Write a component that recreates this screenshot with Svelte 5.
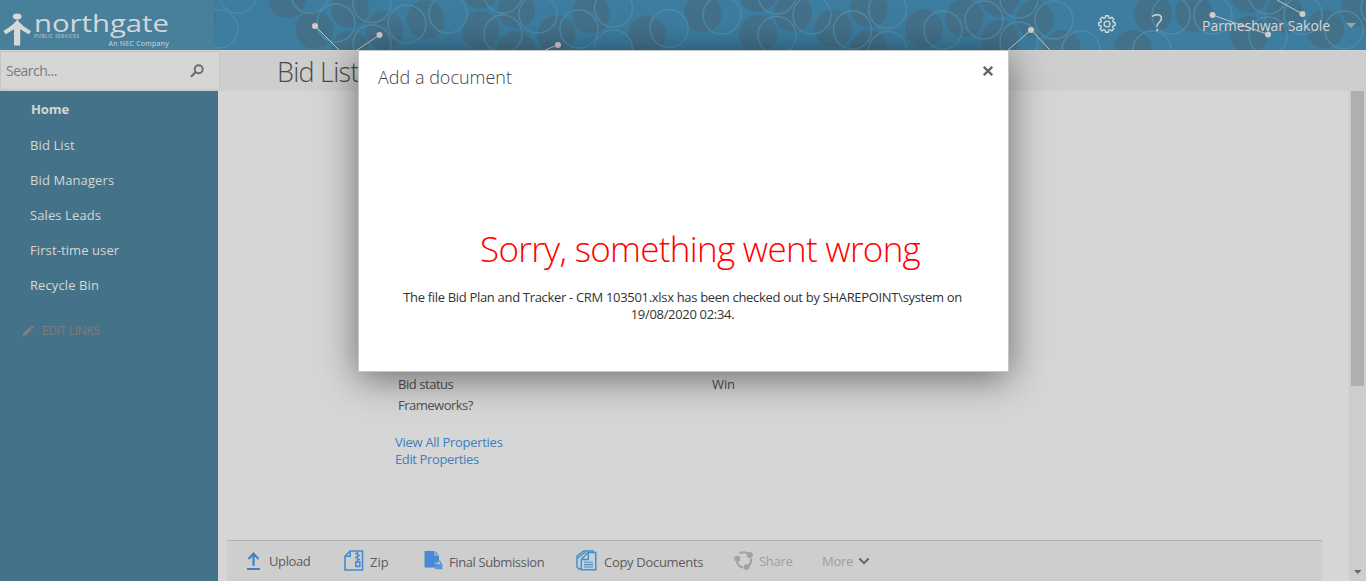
<script>
  const discs = [
    [197, 17], [287, -1], [314.5, 30], [350, 9], [350, 50], [384.5, 30], [425.5, 19.5], [480.5, -10.5],
    [480.5, 30.5], [516, 9], [516, 50], [556.5, 34.5], [591, 14], [647, 35], [703, 13], [758, -7], [758, 34],
    [793, 13], [833.5, 28.5], [869, 8], [869, 49], [924, 28.5], [964.5, 18], [1000, -2], [1000, 39],
    [1035, 19], [1062, 49], [1133, 49], [1153, 14], [1194, 13], [1249, -6], [1249, 35], [1285, 14],
    [1325, 29], [1360, 8]
  ];
  const rings = [
    [238, -6], [219, 29], [310, -6], [336, 23], [372, 3.5], [372, 44], [407, 24], [448, 14], [503, -6],
    [503, 34], [538, 14], [579, 29], [613.5, 8], [613.5, 49], [669, 28.5], [722, 15], [777, -5], [777, 35.5],
    [812, 15], [852.5, 30], [887.5, 9.5], [887.5, 50.5], [943, 30], [984, 20], [1019, -1], [1019, 41],
    [1054, 20], [1081, 50], [1152, 50], [1171, 15], [1213, 15], [1268, -5], [1268, 36], [1303, 15],
    [1344, 30], [1380, 8]
  ];
  const dots = [[315, 26], [379.5, 35], [558, 45], [1031, 30], [1212.5, 15], [1268, 34.5], [1302.5, 14]];
  const links = ['Bid List', 'Bid Managers', 'Sales Leads', 'First-time user', 'Recycle Bin'];
</script>

<div class="page">
  <header>
    <svg class="pattern" width="1366" height="50" viewBox="0 0 1366 50">
      <g fill="#44718a">
        {#each discs as [x, y]}<circle cx={x} cy={y} r="19" />{/each}
      </g>
      <g fill="none" stroke="#4e8aa8" stroke-width="1.4">
        {#each rings as [x, y]}<circle cx={x} cy={y} r="19" />{/each}
      </g>
      <path d="M315 26L339 50M379.5 35L357 50M558 45L545 50M1031 30L1008 50M1031 30L1050 50M1212.5 15L1268 34.5M1302.5 14L1277 0" fill="none" stroke="#c5c5c3" stroke-width="1" />
      <g fill="#d2cbc7">
        {#each dots as [x, y]}<circle cx={x} cy={y} r="3" />{/each}
      </g>
    </svg>
    <div class="brand">
      <svg class="figure" width="29" height="34" viewBox="0 0 29 34">
        <ellipse cx="14.2" cy="3.5" rx="4.4" ry="3" fill="#d6d8da" />
        <path d="M14.2 6.5C17 10.5 21 14 28 18L26 21.3C23.5 20 20 18 17.2 16.3V32.5H11V16.3C8 18 5 20 2.5 21.3L.5 18C7 14 11.5 10.5 14.2 6.5Z" fill="#d6d8da" />
      </svg>
      <div class="words">
        <span class="name">northgate</span>
        <span class="sub">PUBLIC SERVICES</span>
        <span class="nec">An NEC Company</span>
      </div>
    </div>
    <div class="tools">
      <svg class="gear" width="18" height="18" viewBox="0 0 18 18" fill="none" stroke="#d2d5d7" stroke-width="1.4" stroke-linejoin="round">
        <path d="M7.6.8h2.8l.4 2 1.3.6 1.8-1.2 2 2-1.2 1.7.5 1.4 2 .4v2.7l-2 .4-.6 1.3 1.2 1.8-2 2-1.7-1.2-1.4.6-.4 2H7.6l-.4-2-1.4-.6-1.7 1.2-2-2 1.2-1.8-.6-1.3-2-.4V7.7l2-.4.6-1.4-1.2-1.7 2-2 1.8 1.2 1.3-.6z" />
        <circle cx="9" cy="9" r="2.9" />
      </svg>
      <svg class="help" width="12" height="18" viewBox="0 0 12 18" fill="none" stroke="#d2d5d7" stroke-width="1.5">
        <path d="M1.3 2.5C4-.1 10.4-.2 10.4 4.4C10.4 8 6 8.2 6 12.7" />
        <path d="M6 15.2V17.2" stroke-width="1.8" />
      </svg>
      <span class="user">Parmeshwar Sakole</span>
      <i class="caret"></i>
    </div>
  </header>

  <div class="titlebar">
    <div class="search">
      <span>Search...</span>
      <svg width="14" height="14" viewBox="0 0 14 14" fill="none" stroke="#6c6c6c">
        <circle cx="8.7" cy="5.2" r="4" stroke-width="1.9" />
        <path d="M5.8 8L1 12.8" stroke-width="2.2" />
      </svg>
    </div>
    <h1>Bid List</h1>
  </div>

  <div class="main">
    <nav>
      <b>Home</b>
      {#each links as link}<a href="#top">{link}</a>{/each}
      <div class="edit">
        <svg width="12" height="12" viewBox="0 0 12 12" fill="#847f7e"><path d="M.5 11.5l.8-3.3L7.3 2.4l2.3 2.3-6 5.9zM8 1.7L9.2.6c.8-.7 2.8 1.1 2.1 2.2L10.2 4z" /></svg>
        <span>EDIT LINKS</span>
      </div>
    </nav>
    <section>
      <div class="details">
        <div class="row"><span class="k1">Bid status</span><span class="win">Win</span></div>
        <div class="row"><span class="k2">Frameworks?</span></div>
        <div class="actions">
          <a class="view" href="#all">View All Properties</a>
          <a class="editp" href="#edit">Edit Properties</a>
        </div>
      </div>
      <footer>
        <div class="item upload">
          <svg width="14" height="18" viewBox="0 0 14 18" fill="none" stroke="#3f83c4" stroke-width="2.2"><path d="M6.5 13.8V2M1.5 7L6.5 1.7l5 5.3M0 17h13" /></svg>
          <span>Upload</span>
        </div>
        <div class="item zip low">
          <svg width="20" height="21" viewBox="0 0 20 21" fill="none" stroke="#478bd1" stroke-width="1.6">
            <path d="M6.2 1H18.5V20H1V6.2zM6.2 1V6.2H1" />
            <path d="M13.5 1V12M11 3.5h2.5M13.5 5.5H16M11 7.5h2.5M13.5 9.5H16M11.8 12h4v4.4h-4z" />
          </svg>
          <span>Zip</span>
        </div>
        <div class="item final low">
          <svg width="19" height="19" viewBox="0 0 19 19" fill="#4989d6">
            <path d="M.5 0H10.5V4.5H15V10.5H13.5L11 12V16.5H.5z" />
            <path d="M11.2 0L15 3.8H11.2z" fill="#6d9edb" />
            <path d="M11 13h7.5v5.2H11z" fill="#5f96d8" /><path d="M12.6 13.2v-.9a2.1 2.1 0 014.2 0v.9" fill="none" stroke="#5f96d8" stroke-width="1.4" />
          </svg>
          <span>Final Submission</span>
        </div>
        <div class="item copy low">
          <svg width="21" height="21" viewBox="0 0 21 21" fill="none" stroke="#3f91cf" stroke-width="1.5">
            <path d="M12 2.5H19.8V19.8H5.3V9.5zM12.3 2.5V9.5H5.3" />
            <path d="M5 19H2.8L1 17V6L7.6.9H17V2.5M1.2 8.5L10 1.5" /><path d="M8 12.2h9M8 14.6h9M8 17h9" stroke-width="1.1" />
          </svg>
          <span>Copy Documents</span>
        </div>
        <div class="item share muted">
          <svg width="20" height="19" viewBox="0 0 20 19" fill="none" stroke="#a1a1a1" stroke-width="2.1">
            <path d="M5.5 2.5C8 .8 12 .8 14 2.5M17 7.5C17.4 11 16.3 13.5 14 15M9 16.7C5.7 16 3.6 13.7 3 10.8" />
            <circle cx="3.3" cy="7.7" r="2" fill="#a1a1a1" /><circle cx="15.8" cy="4" r="2" fill="#a1a1a1" /><circle cx="12.5" cy="16" r="1.8" fill="#a1a1a1" />
          </svg>
          <span>Share</span>
        </div>
        <div class="item more muted">
          <span>More</span>
          <svg width="12" height="8" viewBox="0 0 12 8" fill="none" stroke="#666" stroke-width="2"><path d="M1.3 1.5L6 6.2l4.7-4.7" /></svg>
        </div>
      </footer>
    </section>
    <aside><i class="thumb"></i><svg width="8" height="4" viewBox="0 0 8 4"><path d="M0 0h7.5L3.7 4z" fill="#666" /></svg></aside>
  </div>

  <div class="modal">
    <div class="head">
      <h2>Add a document</h2>
      <svg width="10" height="10" viewBox="0 0 10 10" fill="none" stroke="#666" stroke-width="2.3"><path d="M.8.8l8.4 8.4M9.2.8L.8 9.2" /></svg>
    </div>
    <h3>Sorry, something went wrong</h3>
    <p><span class="p1">The file Bid Plan and Tracker - CRM 103501.xlsx has been checked out by SHAREPOINT\system on</span><br /><span class="p2">19/08/2020 02:34.</span></p>
  </div>
</div>

<style>
  :global(body) { margin: 0; overflow: hidden; }
  .page { position: relative; width: 1366px; height: 581px; overflow: hidden; background: #d6d6d6; font: 13px/17px "Segoe UI", "Open Sans", "Noto Sans", sans-serif; color: #505050; display: flex; flex-direction: column; }
  .page * { box-sizing: border-box; }
  span, h1, h2, h3, a, b { white-space: nowrap; }
  h1, h2, h3, p { margin: 0; font-weight: 300; }
  a { text-decoration: none; }
  header { position: relative; height: 50px; flex: none; background: #3d7d9f; display: flex; justify-content: space-between; }
  .pattern { position: absolute; left: 0; top: 0; }
  .brand { position: relative; width: 214px; background: #48809c; padding: 13px 0 0 3px; display: flex; gap: 2px; }
  .words { width: 135px; display: flex; flex-direction: column; color: #d4d7d9; }
  .name { font-size: 24px; line-height: 19px; height: 21px; transform: scaleX(1.22); transform-origin: left; width: 110px; }
  .sub { font-size: 5px; line-height: 4px; height: 4px; font-weight: 600; opacity: .7; letter-spacing: .3px; }
  .nec { font-size: 7px; line-height: 9px; align-self: flex-end; letter-spacing: .25px; margin-top: 1px; }
  .tools { position: relative; display: flex; align-items: center; padding-right: 10px; }
  .gear { margin: -3px 35px 0 0; }
  .help { margin: -4px 39px 0 0; }
  .user { font-size: 14px; line-height: 20px; color: #d6d6d6; width: 129px; letter-spacing: -.03px; margin-top: 2px; }
  .caret { margin-left: 15px; border: 5.5px solid transparent; border-top-color: #a5a09f; border-bottom: 0; }
  .titlebar { flex: none; height: 41px; display: flex; background: #cecece; border-top: 1px solid #d3d3d3; }
  .search { width: 220px; height: 39px; border: 1px solid #c3c3c3; background: #d6d6d6; display: flex; align-items: center; justify-content: space-between; padding: 0 15px 0 5px; color: #7b7b7b; font-size: 14px; letter-spacing: -.5px; }
  h1 { font-size: 27px; line-height: 41px; margin-left: 57px; color: #4a4a4a; letter-spacing: -.75px; }
  .main { flex: 1; min-height: 0; display: flex; }
  nav { width: 218px; background: #447389; padding: 1px 0 0 30px; display: flex; flex-direction: column; color: #d6d6d6; }
  nav b { font-size: 13px; line-height: 35px; height: 36px; padding-left: 1px; font-weight: 700; letter-spacing: -.1px; }
  nav a { color: #d6d6d6; line-height: 35px; height: 35px; letter-spacing: .1px; }
  .edit { display: flex; align-items: center; gap: 8px; margin: 18px 0 0 -8px; color: #7d7b7b; font-size: 12px; line-height: 20px; letter-spacing: -.35px; }
  section { flex: 1; padding: 285px 27px 0 9px; display: flex; flex-direction: column; justify-content: space-between; }
  .details { padding-left: 168px; }
  .row { display: flex; height: 21px; line-height: 17px; padding-left: 3px; letter-spacing: -.5px; }
  .win { letter-spacing: -.1px; }
  .k1 { width: 314px; letter-spacing: -.45px; }
  .actions { display: flex; flex-direction: column; margin-top: 16px; letter-spacing: -.28px; }
  .actions a { color: #3f80bd; }
  .editp { letter-spacing: -.38px; }
  footer { height: 41px; background: #cecece; border-top: 1px solid #b3b3b3; display: flex; align-items: center; padding-left: 20px; color: #5c5c5c; letter-spacing: -.38px; }
  .item { display: flex; align-items: center; flex: none; }
  .item svg { margin-right: 8px; }
  .low span { margin-top: 2px; }
  .upload { width: 97px; }
  .zip { width: 80px; letter-spacing: 0; }
  .zip svg { margin: -2px 6px 0 0; }
  .final { width: 152px; letter-spacing: -.4px; }
  .final svg { margin: -1px 6px 0 0; }
  .copy { width: 158px; letter-spacing: -.3px; }
  .copy svg { margin: -2px 7px 0 0; }
  .share { width: 88px; }
  .share svg { margin: -1px 5px 0 0; }
  .muted { color: #9e9e9e; letter-spacing: -.3px; }
  .more svg { margin: 0 0 0 5px; }
  aside { width: 17px; background: #cdcdcd; display: flex; flex-direction: column; align-items: center; justify-content: space-between; padding-bottom: 7px; }
  .thumb { width: 13px; height: 295px; background: #afafaf; }
  .modal { position: absolute; left: 358px; top: 50px; width: 651px; height: 322px; background: #fff; border: 1px solid #c6c6c6; box-shadow: 0 6px 36px rgba(0,0,0,.5); }
  .head { display: flex; justify-content: space-between; padding: 15px 15px 0 19px; height: 50px; }
  h2 { font-size: 18px; line-height: 24px; color: #444; margin-top: -1px; }
  h3 { font-size: 35px; line-height: 50px; color: #f00; margin: 123px 0 0 121px; letter-spacing: -.7px; }
  p { margin-top: 15px; text-align: center; font-weight: 400; color: #333; line-height: 17px; padding-right: 2px; }
  .p1, .p2 { letter-spacing: -.315px; }
</style>
